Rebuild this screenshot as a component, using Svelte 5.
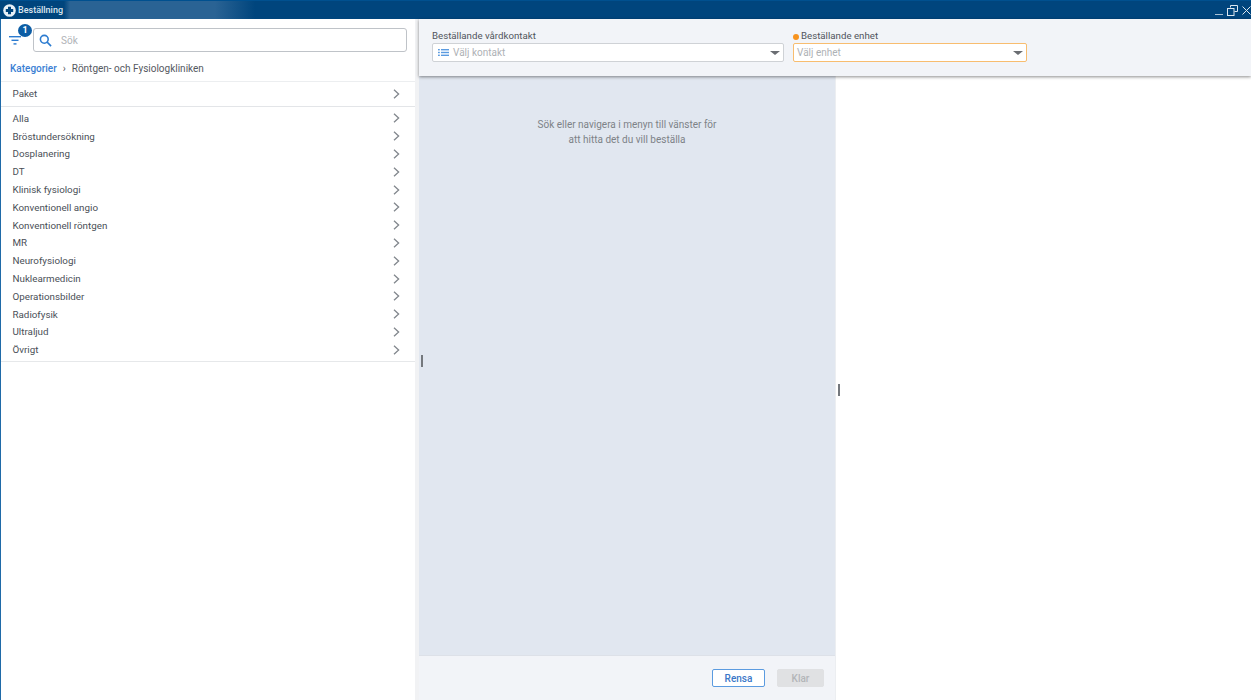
<script>
	const categories = [
		'Alla',
		'Bröstundersökning',
		'Dosplanering',
		'DT',
		'Klinisk fysiologi',
		'Konventionell angio',
		'Konventionell röntgen',
		'MR',
		'Neurofysiologi',
		'Nuklearmedicin',
		'Operationsbilder',
		'Radiofysik',
		'Ultraljud',
		'Övrigt'
	];
</script>

<div class="window">
	<header class="titlebar">
		<div class="title">
			<svg class="logo" width="13" height="13" viewBox="0 0 13 13">
				<circle cx="6.5" cy="6.5" r="6.3" fill="#e8f0f6" />
				<path d="M5 2.8h3v2.2h2.2v3H8v2.2H5V8H2.8V5H5z" fill="#00457d" />
			</svg>
			<span>Beställning</span>
		</div>
		<div class="winbtns">
			<svg width="8" height="9" viewBox="0 0 8 9"><path d="M0 8.5h8" stroke="#a9c0d4" stroke-width="1" /></svg>
			<svg width="11" height="11" viewBox="0 0 11 11" fill="none" stroke="#dbe6ef">
				<path d="M3.5 2.5V.5h7v6h-3" />
				<rect x="0.5" y="3.5" width="6.5" height="7" />
			</svg>
			<svg width="9" height="9" viewBox="0 0 9 9"><path d="M.5.5l8 8M8.5.5l-8 8" stroke="#dbe6ef" stroke-width="1" /></svg>
		</div>
	</header>

	<div class="content">
		<aside class="sidebar">
			<div class="searchrow">
				<div class="filter">
					<svg width="12" height="9" viewBox="0 0 12 9" fill="#2b7bd0">
						<rect x="0" y="0" width="12" height="1.4" />
						<rect x="2.5" y="3.6" width="7" height="1.4" />
						<rect x="4.5" y="7.2" width="3" height="1.4" />
					</svg>
					<span class="badge">1</span>
				</div>
				<div class="search">
					<svg width="13" height="13" viewBox="0 0 14 14" fill="none" stroke="#2b7bd0" stroke-width="1.7">
						<circle cx="5.7" cy="5.7" r="4.2" />
						<path d="M8.8 8.8L13 13" />
					</svg>
					<span>Sök</span>
				</div>
			</div>
			<nav class="crumbs">
				<span class="crumb-link">Kategorier</span>
				<span class="crumb-sep">›</span>
				<span>Röntgen- och Fysiologkliniken</span>
			</nav>
			<div class="pkg">
				<div class="row">
					<span>Paket</span>
					<svg class="chev" width="7" height="10" viewBox="0 0 7 10" fill="none"><path d="M1 .8L5.6 5 1 9.2" /></svg>
				</div>
			</div>
			<div class="list">
				{#each categories as name}
					<div class="row item">
						<span>{name}</span>
						<svg class="chev" width="7" height="10" viewBox="0 0 7 10" fill="none"><path d="M1 .8L5.6 5 1 9.2" /></svg>
					</div>
				{/each}
			</div>
		</aside>

		<main class="main">
			<section class="topbar">
				<div class="field contact">
					<span class="label">Beställande vårdkontakt</span>
					<div class="select">
						<svg width="11" height="7" viewBox="0 0 11 7" fill="#5b9be0">
							<rect x="0" y="0" width="1.8" height="1.4" /><rect x="3" y="0" width="8" height="1.4" />
							<rect x="0" y="2.8" width="1.8" height="1.4" /><rect x="3" y="2.8" width="8" height="1.4" />
							<rect x="0" y="5.6" width="1.8" height="1.4" /><rect x="3" y="5.6" width="8" height="1.4" />
						</svg>
						<span class="ph">Välj kontakt</span>
						<i class="caret"></i>
					</div>
				</div>
				<div class="field unit">
					<span class="label"><i class="dot"></i>Beställande enhet</span>
					<div class="select required">
						<span class="ph">Välj enhet</span>
						<i class="caret"></i>
					</div>
				</div>
			</section>

			<div class="panes">
				<div class="middle">
					<div class="hint">
						<p>Sök eller navigera i menyn till vänster för</p>
						<p>att hitta det du vill beställa</p>
					</div>
					<i class="handle left"></i>
					<i class="handle right"></i>
					<footer class="actions">
						<button class="btn clear">Rensa</button>
						<button class="btn done" disabled>Klar</button>
					</footer>
				</div>
				<div class="detail"></div>
			</div>
		</main>
	</div>
</div>

<style>
	:global(body) {
		margin: 0;
		font-family: Roboto, "Liberation Sans", sans-serif;
		overflow: hidden;
	}

	.window {
		height: 700px;
		display: flex;
		flex-direction: column;
		background: #fff;
		font-size: 10px;
		color: #4a4f57;
	}

	.titlebar {
		height: 19px;
		flex: none;
		display: flex;
		justify-content: space-between;
		align-items: center;
		background: linear-gradient(90deg, #00457d 0, #00457d 64px, #2a6394 70px, #2a6394 215px, #00457d 255px);
		border-top: 1px solid #00508f;
		box-sizing: border-box;
		color: #dbe6ef;
	}

	.title {
		display: flex;
		align-items: center;
		gap: 2px;
		padding-left: 3px;
		font-size: 9px;
		font-weight: 500;
		white-space: nowrap;
		flex: none;
	}

	.logo {
		flex: none;
	}

	.winbtns {
		display: flex;
		align-items: center;
		gap: 4px;
	}

	.content {
		flex: 1;
		display: flex;
		min-height: 0;
	}

	.sidebar {
		width: 419px;
		flex: none;
		box-sizing: border-box;
		border-left: 1px solid #1f6aa8;
		border-right: 4px solid #f1f2f4;
	}

	.searchrow {
		display: flex;
		align-items: center;
		height: 42px;
		padding: 0 8px 0 8px;
		box-sizing: border-box;
	}

	.filter {
		position: relative;
		width: 24px;
		height: 9px;
		flex: none;
		display: flex;
	}

	.badge {
		position: absolute;
		left: 9px;
		top: -12px;
		width: 14px;
		height: 13px;
		border-radius: 50%;
		background: #0c5da5;
		color: #fff;
		font-size: 9px;
		font-weight: 700;
		text-align: center;
		line-height: 13px;
	}

	.search {
		flex: 1;
		height: 24px;
		box-sizing: border-box;
		border: 1px solid #bfc3c8;
		border-radius: 3px;
		display: flex;
		align-items: center;
		gap: 9px;
		padding-left: 5px;
		color: #b0b3b7;
	}

	.crumbs {
		height: 14px;
		padding-bottom: 6px;
		display: flex;
		align-items: center;
		gap: 6px;
		padding-left: 9px;
		color: #55595f;
	}

	.crumb-link {
		color: #3b7fd4;
		font-weight: 500;
	}

	.pkg {
		border-top: 1px solid #eceef0;
		border-bottom: 1px solid #e3e5e8;
		height: 24px;
	}

	.pkg .row {
		height: 23px;
	}

	.row {
		display: flex;
		justify-content: space-between;
		align-items: center;
		padding: 0 15px 0 11.5px;
		font-size: 9.8px;
		color: #4a4f57;
	}

	.item {
		height: 17.8px;
	}

	.list {
		padding: 2.5px 0 2.5px;
		border-bottom: 1px solid #e6e8ea;
	}

	.chev {
		stroke: #82878d;
		stroke-width: 1.3;
	}

	.main {
		flex: 1;
		display: flex;
		flex-direction: column;
		min-width: 0;
	}

	.topbar {
		height: 57px;
		flex: none;
		display: flex;
		gap: 9px;
		padding: 11px 0 0 13px;
		box-sizing: border-box;
		background: #f2f4f8;
		box-shadow: 0 1px 3px rgba(0, 0, 0, 0.45);
		position: relative;
		z-index: 1;
	}

	.field {
		display: flex;
		flex-direction: column;
		gap: 1px;
	}

	.contact {
		width: 352px;
	}

	.unit {
		width: 234px;
	}

	.label {
		height: 12px;
		line-height: 12px;
		font-size: 9.7px;
		color: #50555c;
		display: flex;
		align-items: center;
	}

	.dot {
		width: 6px;
		height: 6px;
		border-radius: 50%;
		background: #f7931e;
		margin-right: 2px;
		margin-top: 2px;
	}

	.select {
		height: 19px;
		box-sizing: border-box;
		border: 1px solid #cfd2d6;
		border-radius: 2px;
		background: #fff;
		display: flex;
		align-items: center;
		gap: 4px;
		padding: 0 3px 0 5px;
	}

	.select.required {
		border-color: #f8bd6f;
		padding-left: 3px;
	}

	.ph {
		color: #aeb1b5;
		flex: 1;
	}

	.caret {
		width: 0;
		height: 0;
		border-left: 5px solid transparent;
		border-right: 5px solid transparent;
		border-top: 4px solid #6a6d72;
	}

	.panes {
		flex: 1;
		display: flex;
		min-height: 0;
	}

	.middle {
		width: 417px;
		flex: none;
		position: relative;
		box-sizing: border-box;
		display: flex;
		flex-direction: column;
		background: #e1e7f0;
		border-right: 1px solid #eceef1;
	}

	.hint {
		flex: 1;
		padding-top: 41px;
		text-align: center;
		color: #7d8287;
	}

	.hint p {
		margin: 0;
		line-height: 15px;
	}

	.handle {
		position: absolute;
		width: 2px;
		height: 12px;
		background: #74787d;
	}

	.handle.left {
		left: 2px;
		top: 279px;
	}

	.handle.right {
		right: -5px;
		top: 308px;
	}

	.actions {
		height: 45px;
		flex: none;
		box-sizing: border-box;
		border-top: 1px solid #dde1e8;
		background: #f2f4f8;
		display: flex;
		justify-content: flex-end;
		align-items: center;
		gap: 12px;
		padding-right: 11px;
	}

	.btn {
		height: 18px;
		box-sizing: border-box;
		font: 500 10px Roboto, "Liberation Sans", sans-serif;
		border-radius: 2px;
		padding: 0;
	}

	.clear {
		width: 53px;
		background: #fff;
		border: 1px solid #5b9be0;
		color: #3b78c8;
	}

	.done {
		width: 47px;
		background: #e0e1e3;
		border: 1px solid #e0e1e3;
		color: #b3b5b8;
	}

	.detail {
		flex: 1;
		background: #fff;
	}
</style>
